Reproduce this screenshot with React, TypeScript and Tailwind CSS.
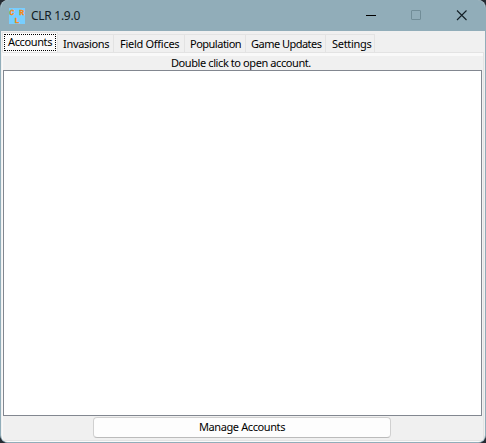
const tabs = [
  { label: 'Invasions', box: 'w-[56px] pl-[5px]', text: 'tracking-[-0.32px]' },
  { label: 'Field Offices', box: 'w-[71px] pl-[6px]', text: 'tracking-[-0.28px]' },
  { label: 'Population', box: 'w-[61px] pl-[5px]', text: 'tracking-[-0.5px]' },
  { label: 'Game Updates', box: 'w-[80px] pl-[5px]', text: 'tracking-[-0.52px]' },
  { label: 'Settings', box: 'w-[49px] pl-[6px]', text: 'tracking-[-0.3px]' },
];

function TitleBar() {
  return (
    <header className="flex h-[31px] shrink-0 items-center bg-[#91adb9] pl-[8px]">
      <svg width="16" height="16" viewBox="0 0 16 16" className="overflow-visible bg-[#77ceff] font-['Liberation_Mono',monospace] text-[8px] font-bold" fill="#f58a10" stroke="#f58a10" strokeWidth="0.3">
        <text x="1" y="7" transform="skewX(-6)">C</text>
        <text x="10.3" y="7">R</text>
        <text x="5.5" y="14.5">L</text>
      </svg>
      <span className="ml-[6px] text-[12px] leading-4 tracking-[-0.28px] text-[#111c22]">CLR 1.9.0</span>
      <svg width="119" height="31" viewBox="0 0 119 31" className="ml-auto" fill="none">
        <path d="M0 15.5H10" stroke="#000" />
        <rect x="45.5" y="10.5" width="9" height="9" rx="0.5" stroke="#718d98" />
        <path d="M91 10.5L100.5 20M100.5 10.5L91 20" stroke="#142027" strokeWidth="1.1" />
      </svg>
    </header>
  );
}

export default function App() {
  return (
    <div className="h-[443px] w-[486px] overflow-hidden bg-[#252b32] font-['Noto_Sans',sans-serif] text-black">
      <div className="flex h-full flex-col overflow-hidden rounded-[8px] border border-[#91adb9] bg-[#f0f0f0] border-t-0">
        <TitleBar />
        <nav className="flex h-[21px] shrink-0 items-end pl-px text-[11px] leading-[15px]">
          <div className="h-[20px] w-[56px] border border-b-0 border-[#e3e3e3] bg-[#fbfbfb] p-px">
            <div className="h-[17px] border border-dotted border-black pl-[3px] leading-[14px] tracking-[-0.38px] whitespace-nowrap">Accounts</div>
          </div>
          {tabs.map((tab) => (
            <div key={tab.label} className={`h-[18px] border-t border-r border-[#e3e3e3] leading-[17px] whitespace-nowrap ${tab.box} ${tab.text}`}>
              {tab.label}
            </div>
          ))}
        </nav>
        <main className="mx-px flex min-h-0 flex-1 flex-col border border-[#e3e3e3] border-l-[#f9f9f9] border-t-[#e3e3e3] bg-[#f0f0f0]">
          <div className="h-[3px] shrink-0 bg-[#f9f9f9]" />
          <p className="h-[14px] shrink-0 pl-[168px] text-[11px] leading-[14px] tracking-[-0.41px]">Double click to open account.</p>
          <div className="h-[346px] w-[479px] shrink-0 border border-[#828790] bg-white" />
          <div className="flex pt-px">
            <button className="ml-[90px] h-[21px] w-[298px] rounded-[4px] border border-[#d0d0d0] border-b-[#bbb] bg-[#fdfdfd] pb-[2px] text-[11px] leading-[17px] tracking-[-0.4px]">Manage Accounts</button>
          </div>
        </main>
        <div className="h-px shrink-0 bg-[#fafafa]" />
      </div>
    </div>
  );
}
